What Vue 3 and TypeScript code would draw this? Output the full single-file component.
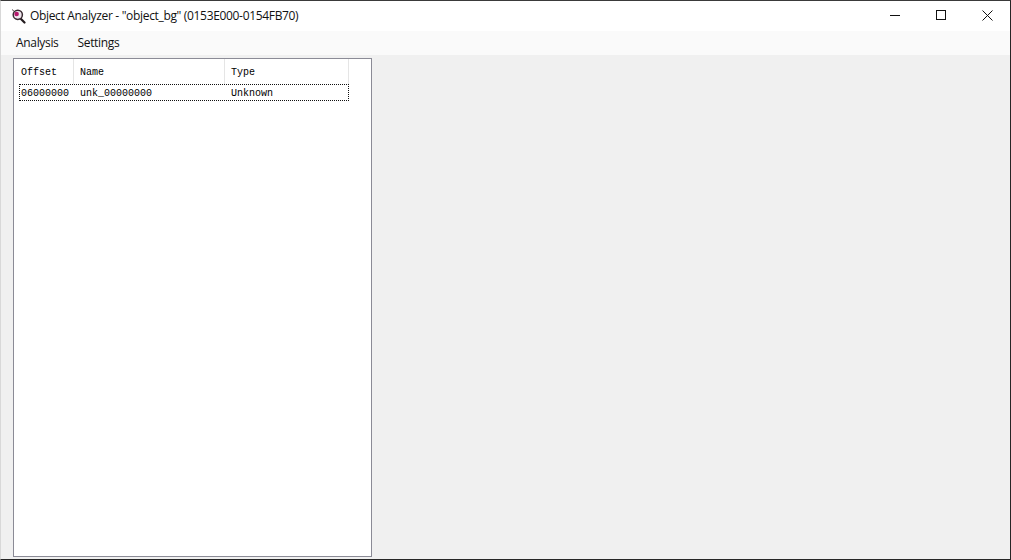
<script setup lang="ts">
// Single row shown in the analyzer list
interface ObjectRow {
  offset: string
  name: string
  type: string
}

const rows: ObjectRow[] = [{ offset: '06000000', name: 'unk_00000000', type: 'Unknown' }]
</script>

<template>
  <div class="window">
    <!-- Title bar -->
    <header class="title-bar">
      <svg class="app-icon" width="16" height="16" viewBox="0 0 16 16">
        <path d="M9.5 10.5 L13.5 14.5" stroke="#221a1e" stroke-width="2.2" stroke-linecap="round" />
        <circle cx="6.8" cy="6.8" r="4.6" fill="#efe6ee" stroke="#3a2c33" stroke-width="1.5" />
        <circle cx="5.6" cy="6" r="2.3" fill="#b5186c" />
        <path d="M1 1.5 L3 3.2" stroke="#5a4a50" stroke-width="1" />
      </svg>
      <span class="title-text">Object Analyzer - "object_bg" (0153E000-0154FB70)</span>
      <div class="window-controls">
        <button type="button" class="control">
          <svg width="11" height="11" viewBox="0 0 11 11"><path d="M0 5.5H10" stroke="#111" fill="none" /></svg>
        </button>
        <button type="button" class="control">
          <svg width="11" height="11" viewBox="0 0 11 11"><rect x="0.5" y="0.5" width="9" height="9" stroke="#111" fill="none" /></svg>
        </button>
        <button type="button" class="control">
          <svg width="11" height="11" viewBox="0 0 11 11"><path d="M0.5 0.5L10.5 10.5M10.5 0.5L0.5 10.5" stroke="#111" fill="none" /></svg>
        </button>
      </div>
    </header>

    <!-- Menu bar -->
    <nav class="menu-bar">
      <span class="menu-item">Analysis</span>
      <span class="menu-item">Settings</span>
    </nav>

    <!-- Content -->
    <main class="content">
      <section class="list-panel">
        <div class="list-header">
          <span class="col col-offset">Offset</span>
          <span class="col col-name">Name</span>
          <span class="col col-type">Type</span>
        </div>
        <div v-for="row in rows" :key="row.offset" class="list-row">
          <span class="col col-offset">{{ row.offset }}</span>
          <span class="col col-name">{{ row.name }}</span>
          <span class="col col-type">{{ row.type }}</span>
        </div>
      </section>
    </main>
  </div>
</template>

<style>
html,
body {
  margin: 0;
  background: #f0f0f0;
}
</style>

<style scoped>
.window {
  width: 1011px;
  height: 560px;
  box-sizing: border-box;
  display: flex;
  flex-direction: column;
  border: 1px solid #262626;
  border-top-color: #3a3a3a;
  border-left-color: #d8d8d8;
  background: #f0f0f0;
  font-family: "Open Sans", "Noto Sans", sans-serif;
  color: #111;
  overflow: hidden;
}

/* ===== Title bar ===== */
.title-bar {
  height: 30px;
  box-sizing: border-box;
  flex: none;
  display: flex;
  align-items: center;
  background: #fff;
  padding: 0 0 1px 10px;
}

.app-icon {
  flex: none;
}

.title-text {
  margin-left: 3px;
  font-size: 12px;
  letter-spacing: -0.33px;
  white-space: nowrap;
}

.window-controls {
  margin-left: auto;
  display: flex;
  align-self: flex-start;
}

.control {
  width: 46px;
  height: 28px;
  padding: 0;
  display: flex;
  align-items: center;
  justify-content: center;
  background: transparent;
  border: none;
}

/* ===== Menu bar ===== */
.menu-bar {
  height: 24px;
  box-sizing: border-box;
  flex: none;
  display: flex;
  align-items: center;
  gap: 19px;
  padding: 0 0 1px 15px;
  background: #fafafa;
  font-size: 12px;
  letter-spacing: -0.33px;
}

/* ===== List panel ===== */
.content {
  flex: 1;
  min-height: 0;
  padding: 3px 0 2px 12px;
  display: flex;
}

.list-panel {
  width: 359px;
  box-sizing: border-box;
  border: 1px solid #8b8b96;
  background: #fff;
  padding: 0 0 0 5px;
  font-family: "Liberation Mono", "DejaVu Sans Mono", monospace;
  font-size: 10px;
  color: #000;
}

.list-header,
.list-row {
  display: flex;
  width: 330px;
  box-sizing: border-box;
}

.list-header {
  height: 25px;
  align-items: center;
  padding-left: 1px;
}

.list-header .col {
  height: 100%;
  display: flex;
  align-items: center;
  padding-top: 2px;
  border-right: 1px solid #e5e5e5;
}

.list-row {
  height: 17px;
  align-items: center;
  outline: 1px dotted #111;
  outline-offset: -1px;
  padding: 2px 0 0 1px;
}

.col {
  box-sizing: border-box;
  padding-left: 1px;
  white-space: nowrap;
}

.col-offset {
  width: 54px;
}

.col-name {
  width: 151px;
  padding-left: 6px;
}

.col-type {
  width: 124px;
  padding-left: 6px;
}
</style>
